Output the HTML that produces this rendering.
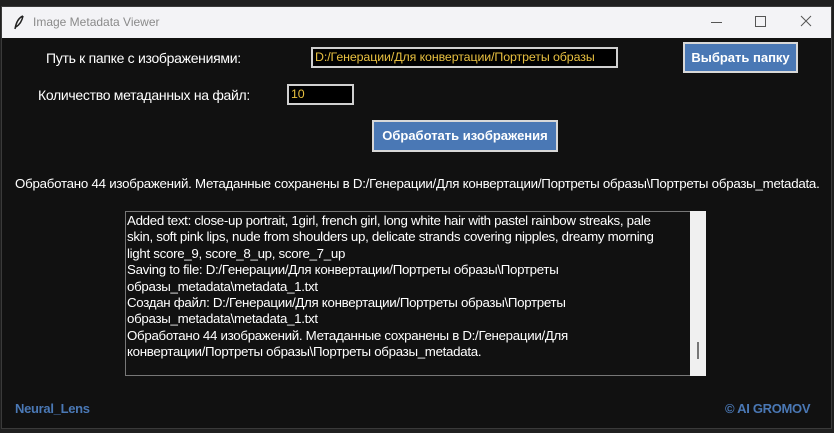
<!DOCTYPE html>
<html><head><meta charset="utf-8"><style>
html,body{margin:0;padding:0;width:834px;height:433px;overflow:hidden;background:#202020;font-family:"Liberation Sans",Arial,sans-serif;}
.win{position:absolute;left:1px;top:6px;width:831px;height:423px;background:#111111;border:1px solid #3a3a3a;box-sizing:border-box;}
.title{position:absolute;left:0;top:0;width:100%;height:31px;background:#f3f3f6;}
.title .t{position:absolute;left:31px;top:8px;font-size:12px;color:#8a8a8a;}
.abs{position:absolute;white-space:nowrap;color:#fff;font-size:14px;letter-spacing:-0.3px;}
.entry{position:absolute;background:#000;border:2px solid #d0d0d0;box-sizing:border-box;color:#e8c040;font-size:12.4px;padding:1px 2px;white-space:nowrap;letter-spacing:-0.1px;}
.btn{position:absolute;background:#4a78b5;border:2px solid #d8d8d8;box-sizing:border-box;color:#fff;font-weight:bold;font-size:13px;text-align:center;white-space:nowrap;}
.box{position:absolute;left:125px;top:211px;width:566px;height:165px;border:1px solid #777;box-sizing:border-box;background:#111;color:#fff;font-size:13.3px;line-height:16.4px;padding:1px 1px;letter-spacing:-0.3px;}
.sb{position:absolute;left:690px;top:211px;width:16px;height:165px;background:#f0f0f0;}
</style></head><body>
<div class="win">
 <div class="title">
  <svg style="position:absolute;left:11px;top:8px" width="12" height="16" viewBox="0 0 12 16"><path d="M10 1 C5 3 3 8 2 14 M10 1 C9 6 6 10 3 12" stroke="#222" stroke-width="1.5" fill="none"/></svg>
  <span class="t">Image Metadata Viewer</span>
  <div style="position:absolute;left:709px;top:15px;width:11px;height:1px;background:#555"></div>
  <div style="position:absolute;left:753px;top:9px;width:9px;height:9px;border:1px solid #555"></div>
  <svg style="position:absolute;left:798px;top:8px" width="12" height="12"><path d="M1 1L11 11M11 1L1 11" stroke="#555" stroke-width="1"/></svg>
 </div>
</div>
<div class="abs" style="left:46px;top:50px">Путь к папке с изображениями:</div>
<div class="entry" style="left:311px;top:47px;width:307px;height:21px">D:/Генерации/Для конвертации/Портреты образы</div>
<div class="btn" style="left:683px;top:42px;width:115px;height:31px;line-height:27px">Выбрать папку</div>
<div class="abs" style="left:38px;top:87px">Количество метаданных на файл:</div>
<div class="entry" style="left:287px;top:84px;width:67px;height:21px">10</div>
<div class="btn" style="left:372px;top:120px;width:186px;height:32px;line-height:28px">Обработать изображения</div>
<div class="abs" style="left:15px;top:176px;font-size:13.3px;letter-spacing:-0.25px">Обработано 44 изображений. Метаданные сохранены в D:/Генерации/Для конвертации/Портреты образы\Портреты образы_metadata.</div>
<div class="box">Added text: close-up portrait, 1girl, french girl, long white hair with pastel rainbow streaks, pale<br>skin, soft pink lips, nude from shoulders up, delicate strands covering nipples, dreamy morning<br>light score_9, score_8_up, score_7_up<br>Saving to file: D:/Генерации/Для конвертации/Портреты образы\Портреты<br>образы_metadata\metadata_1.txt<br>Создан файл: D:/Генерации/Для конвертации/Портреты образы\Портреты<br>образы_metadata\metadata_1.txt<br>Обработано 44 изображений. Метаданные сохранены в D:/Генерации/Для<br>конвертации/Портреты образы\Портреты образы_metadata.</div>
<div class="sb"><div style="position:absolute;left:7px;top:131px;width:2px;height:17px;background:#777"></div></div>
<div class="abs" style="left:15px;top:401px;color:#4a78b5;font-weight:bold;font-size:13px">Neural_Lens</div>
<div class="abs" style="left:725px;top:401px;color:#4a78b5;font-weight:bold;font-size:13px">© AI GROMOV</div>
</body></html>
